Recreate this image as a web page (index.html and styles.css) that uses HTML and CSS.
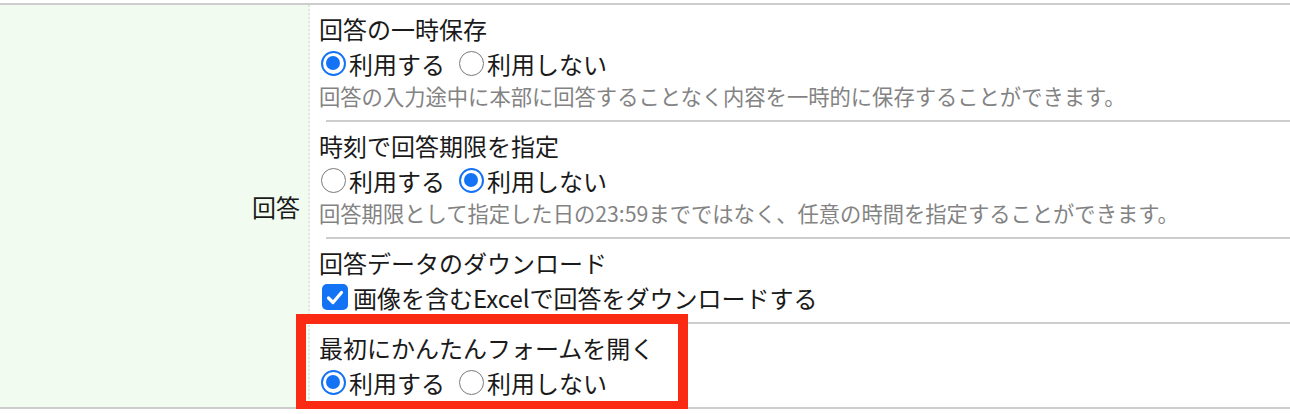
FILE: index.html
```html
<!DOCTYPE html>
<html lang="ja">

<head>
    <meta charset="UTF-8">
    <meta name="viewport" content="width=device-width, initial-scale=1.0">
    <title>回答設定</title>

    <!-- CSS styling -->
    <link rel="stylesheet" href="styles.css">
</head>

<body>
    <!-- Settings table: answer options -->
    <div class="settings">
        <div class="settings-row">
            <div class="settings-head">回答</div>
            <div class="settings-body">

                <div class="item">
                    <div class="item-title">回答の一時保存</div>
                    <div class="choices">
                        <label class="choice"><span class="radio on"></span>利用する</label>
                        <label class="choice"><span class="radio"></span>利用しない</label>
                    </div>
                    <div class="item-desc">回答の入力途中に本部に回答することなく内容を一時的に保存することができます。</div>
                </div>

                <hr class="sep">

                <div class="item">
                    <div class="item-title">時刻で回答期限を指定</div>
                    <div class="choices">
                        <label class="choice"><span class="radio"></span>利用する</label>
                        <label class="choice"><span class="radio on"></span>利用しない</label>
                    </div>
                    <div class="item-desc">回答期限として指定した日の23:59までではなく、任意の時間を指定することができます。</div>
                </div>

                <hr class="sep">

                <div class="item">
                    <div class="item-title">回答データのダウンロード</div>
                    <div class="choices">
                        <label class="choice">
                            <span class="checkbox">
                                <svg width="18" height="15" viewBox="0 0 18 15">
                                    <path d="M2.5 8 L7 12.5 L15.5 2.5" fill="none" stroke="#fff" stroke-width="3.2" stroke-linecap="round" stroke-linejoin="round"/>
                                </svg>
                            </span>画像を含むExcelで回答をダウンロードする
                        </label>
                    </div>
                </div>

                <hr class="sep">

                <div class="item highlighted">
                    <div class="item-title">最初にかんたんフォームを開く</div>
                    <div class="choices">
                        <label class="choice"><span class="radio on"></span>利用する</label>
                        <label class="choice"><span class="radio"></span>利用しない</label>
                    </div>
                    <!-- red annotation frame -->
                    <div class="mark"></div>
                </div>

            </div>
        </div>
    </div>
</body>

</html>
```

FILE: styles.css
```css
/* General body styles */
body {
    font-family: "Noto Sans CJK JP", sans-serif;
    margin: 0;
    padding: 3px 0 0;
    color: #1a1a1a;
    background-color: #fff;
}

/* Settings table */
.settings {
    border-top: 2px solid #cdcdcd;
    border-bottom: 2px solid #cdcdcd;
}

.settings-row {
    display: grid;
    grid-template-columns: 310px 1fr;
}

/* Left heading cell */
.settings-head {
    background-color: #f2fbef;
    border-right: 2px dotted #e2e6e0;
    display: flex;
    align-items: center;
    justify-content: flex-end;
    padding-right: 8px;
    font-size: 24px;
}

.settings-body {
    padding-left: 9px;
}

/* One option block */
.item {
    padding: 7px 0 8px;
}

.item.highlighted {
    position: relative;
}

.item-title {
    font-size: 24px;
    line-height: 34px;
}

.item-desc {
    font-size: 21.3px;
    line-height: 32px;
    color: #838383;
}

/* Separator between items */
.sep {
    border: 0;
    border-top: 2px solid #cdcdcd;
    margin: 0 0 0 7px;
}

/* Radios and checkbox */
.choices {
    display: flex;
    align-items: center;
    height: 34px;
    font-size: 24px;
}

.choice {
    display: flex;
    align-items: center;
    margin-right: 12px;
}

.radio {
    box-sizing: border-box;
    flex: none;
    width: 25px;
    height: 25px;
    border: 1.5px solid #7a7a7a;
    border-radius: 50%;
    margin: 0 3px 0 2px;
    position: relative;
    background-color: #fff;
}

.radio.on {
    border: 2.5px solid #1473f5;
}

.radio.on::after {
    content: "";
    position: absolute;
    left: 3px;
    top: 3px;
    width: 14px;
    height: 14px;
    border-radius: 50%;
    background-color: #1473f5;
}

.checkbox {
    flex: none;
    width: 26px;
    height: 26px;
    border-radius: 5px;
    background-color: #1473f5;
    margin: 0 5px 0 3px;
    display: flex;
    align-items: center;
    justify-content: center;
}

/* Red annotation frame over the last item */
.mark {
    position: absolute;
    left: -23px;
    top: -10px;
    width: 372px;
    height: 77px;
    border: 10px solid #fb2a12;
}
```
